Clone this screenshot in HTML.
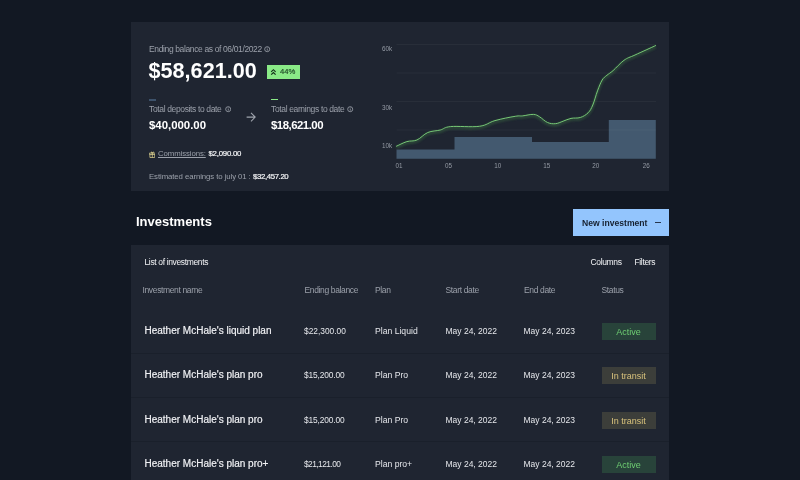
<!DOCTYPE html>
<html lang="en">
<head>
<meta charset="utf-8">
<title>Investments</title>
<style>
*{box-sizing:border-box;margin:0;padding:0}
html,body{width:800px;height:480px;overflow:hidden;background:#121823;}
body{font-family:"Liberation Sans",Arial,sans-serif;color:#fff;position:relative;-webkit-font-smoothing:antialiased}
.abs{position:absolute;white-space:nowrap;line-height:1}
.card{position:absolute;background:#1f2531}
.muted{color:#9ba0aa}
.t8{font-size:8px}
.b{font-weight:700}
.row{position:absolute;left:131px;width:538px;height:44.4px;border-bottom:1px solid #1a202b}
.cell{position:absolute;white-space:nowrap;line-height:1;top:50%;transform:translateY(-50%)}
.name{left:13.5px;font-size:10px;color:#f1f2f5;-webkit-text-stroke:0.18px #f1f2f5}
.amt{left:173px;font-size:8.4px;color:#e5e7eb}
.plan{left:244px;font-size:8.65px;color:#e5e7eb}
.sd{left:314.5px;font-size:8.5px;color:#e5e7eb}
.ed{left:392.5px;font-size:8.5px;color:#e5e7eb}
.badge{position:absolute;left:470.5px;width:54px;height:17px;top:50%;margin-top:-8px;font-size:9px;text-align:center;line-height:18px}
.active{background:#28433a;color:#6fcf73}
.transit{background:#3c3e3a;color:#d8c27c}
</style>
</head>
<body>
<div id="wrap" style="position:absolute;left:0;top:0;width:800px;height:480px;will-change:transform">

<!-- summary card -->
<div class="card" style="left:131px;top:22px;width:538px;height:169px"></div>

<div class="abs muted" style="left:149px;top:45.6px;font-size:8.5px;letter-spacing:-0.37px;margin-top:-0.8px">Ending balance as of 06/01/2022</div>
<svg class="abs" style="left:264.2px;top:46.2px" width="6.4" height="6.4" viewBox="0 0 7 7"><circle cx="3.5" cy="3.5" r="2.75" fill="none" stroke="#a3a8b1" stroke-width="0.85"/><rect x="3.1" y="3" width="0.8" height="2.1" fill="#a3a8b1"/><rect x="3.1" y="1.7" width="0.8" height="0.8" fill="#a3a8b1"/></svg>

<div class="abs b" id="big" style="left:148.6px;top:59.8px;font-size:21.6px;color:#fff">$58,621.00</div>

<div class="abs" style="left:266.8px;top:64.9px;width:33.2px;height:14.2px;background:#8aea87"></div>
<svg class="abs" style="left:270px;top:68px" width="8" height="8" viewBox="0 0 8 8"><path d="M1.2 3.9 L3.4 1.7 L5.6 3.9 M1.2 6.7 L3.4 4.5 L5.6 6.7" fill="none" stroke="#14301a" stroke-width="1.15"/></svg>
<div class="abs" style="left:280px;top:68px;font-size:7.7px;color:#1d4425;-webkit-text-stroke:0.15px #1d4425">44%</div>

<div class="abs" style="left:148.8px;top:98.8px;width:7px;height:1.9px;background:#3d526b"></div>
<div class="abs" style="left:271px;top:98.8px;width:6.6px;height:1.6px;background:#8aea87"></div>

<div class="abs muted" style="left:149px;top:105.5px;font-size:8.5px;letter-spacing:-0.36px;margin-top:-0.8px">Total deposits to date</div>
<svg class="abs" style="left:224.7px;top:106.2px" width="6.4" height="6.4" viewBox="0 0 7 7"><circle cx="3.5" cy="3.5" r="2.75" fill="none" stroke="#a3a8b1" stroke-width="0.85"/><rect x="3.1" y="3" width="0.8" height="2.1" fill="#a3a8b1"/><rect x="3.1" y="1.7" width="0.8" height="0.8" fill="#a3a8b1"/></svg>
<div class="abs b" style="left:149px;top:119.5px;font-size:11.4px">$40,000.00</div>

<svg class="abs" style="left:246.2px;top:112.4px" width="10" height="10" viewBox="0 0 10 10"><path d="M0.6 5.1 H9.2 M5 0.9 L9.2 5.1 L5 9.3" fill="none" stroke="#a0a5ae" stroke-width="1.05"/></svg>

<div class="abs muted" style="left:271px;top:105.5px;font-size:8.5px;letter-spacing:-0.36px;margin-top:-0.8px">Total earnings to date</div>
<svg class="abs" style="left:347.4px;top:106.2px" width="6.4" height="6.4" viewBox="0 0 7 7"><circle cx="3.5" cy="3.5" r="2.75" fill="none" stroke="#a3a8b1" stroke-width="0.85"/><rect x="3.1" y="3" width="0.8" height="2.1" fill="#a3a8b1"/><rect x="3.1" y="1.7" width="0.8" height="0.8" fill="#a3a8b1"/></svg>
<div class="abs b" style="left:271px;top:119.5px;font-size:11.4px;letter-spacing:-0.5px">$18,621.00</div>

<svg class="abs" style="left:148.7px;top:150.9px" width="6.6" height="6.9" viewBox="0 0 6.6 6.9"><path d="M0.4 2.1 H6.2 V3.5 H0.4 Z M0.9 3.5 V6.5 H5.7 V3.5 M3.3 2.1 V6.5 M3.3 2 C2.2 0.1 0.9 1.3 3.3 2 C5.7 1.3 4.4 0.1 3.3 2" fill="none" stroke="#ddd390" stroke-width="0.75" stroke-linejoin="round"/></svg>
<div class="abs muted" style="left:158px;top:149.9px;font-size:7.8px;letter-spacing:-0.1px;text-decoration:underline;text-decoration-thickness:0.6px;text-underline-offset:0.6px">Commissions:</div>
<div class="abs" style="left:208.5px;top:149.9px;font-size:7.8px;color:#f3f4f6;letter-spacing:-0.22px;-webkit-text-stroke:0.2px #f3f4f6">$2,090.00</div>

<div class="abs muted" style="left:149px;top:172.9px;font-size:7.8px;letter-spacing:-0.09px">Estimated earnings to july 01 :</div>
<div class="abs" style="left:253px;top:172.9px;font-size:7.8px;color:#f3f4f6;letter-spacing:-0.37px;-webkit-text-stroke:0.2px #f3f4f6">$32,457.20</div>

<!-- chart -->
<svg class="abs" style="left:370px;top:30px" width="300" height="150" viewBox="370 30 300 150">
  <path d="M396.5 158.8 V149.6 H454.5 V137.1 H532 V142 H608.8 V120 H655.8 V158.8 Z" fill="#43596f"/>
  <g stroke="#ffffff" stroke-opacity="0.055" stroke-width="0.8">
    <line x1="396.5" x2="656" y1="44.5" y2="44.5"/>
    <line x1="396.5" x2="656" y1="73" y2="73"/>
    <line x1="396.5" x2="656" y1="101.5" y2="101.5"/>
    <line x1="396.5" x2="656" y1="130" y2="130"/>
  </g>
  <defs><filter id="gl" x="-5%" y="-20%" width="110%" height="140%"><feGaussianBlur stdDeviation="0.9"/></filter></defs>
  <path d="M396.5 146.2 C398.4 145.4 403.2 142.7 406.9 141.6 C410.6 140.5 413.1 141.6 416.9 140 C420.7 138.4 423.6 134.3 427.8 132.5 C432.0 130.7 436.2 131.1 440.3 130 C444.4 128.9 443.6 127.3 450.6 126.6 C457.6 125.9 471.4 127.4 479.4 126.3 C487.4 125.2 488.5 122.4 495 120.6 C501.5 118.8 510.3 117.1 515.3 116.3 C520.2 115.5 519.2 116.2 522.5 115.9 C525.8 115.6 530.3 114.2 533.4 114.4 C536.5 114.6 537.2 115.4 539.7 116.9 C542.2 118.4 544.7 121.3 547.5 122.5 C550.3 123.7 552.5 123.9 555.3 123.7 C558.1 123.5 560.3 122.2 563.1 121.2 C565.9 120.2 567.9 119.1 571 118.4 C574.1 117.7 577.2 118.5 580.3 117.5 C583.4 116.5 585.9 115.0 588.1 112.8 C590.4 110.5 591.1 108.9 592.8 105 C594.5 101.1 595.8 95.4 597.5 90.9 C599.2 86.4 600.5 82.8 602.2 80 C603.9 77.2 604.9 77.0 606.9 75.3 C608.9 73.6 610.0 73.3 613.1 70.6 C616.2 67.9 620.1 63.1 624 60.3 C627.9 57.5 629.3 57.6 635 55 C640.7 52.4 651.9 47.3 655.6 45.6" fill="none" stroke="#33573c" stroke-width="2.6" stroke-linejoin="round" opacity="0.75" transform="translate(0,1.4)" filter="url(#gl)"/>
  <path d="M396.5 146.2 C398.4 145.4 403.2 142.7 406.9 141.6 C410.6 140.5 413.1 141.6 416.9 140 C420.7 138.4 423.6 134.3 427.8 132.5 C432.0 130.7 436.2 131.1 440.3 130 C444.4 128.9 443.6 127.3 450.6 126.6 C457.6 125.9 471.4 127.4 479.4 126.3 C487.4 125.2 488.5 122.4 495 120.6 C501.5 118.8 510.3 117.1 515.3 116.3 C520.2 115.5 519.2 116.2 522.5 115.9 C525.8 115.6 530.3 114.2 533.4 114.4 C536.5 114.6 537.2 115.4 539.7 116.9 C542.2 118.4 544.7 121.3 547.5 122.5 C550.3 123.7 552.5 123.9 555.3 123.7 C558.1 123.5 560.3 122.2 563.1 121.2 C565.9 120.2 567.9 119.1 571 118.4 C574.1 117.7 577.2 118.5 580.3 117.5 C583.4 116.5 585.9 115.0 588.1 112.8 C590.4 110.5 591.1 108.9 592.8 105 C594.5 101.1 595.8 95.4 597.5 90.9 C599.2 86.4 600.5 82.8 602.2 80 C603.9 77.2 604.9 77.0 606.9 75.3 C608.9 73.6 610.0 73.3 613.1 70.6 C616.2 67.9 620.1 63.1 624 60.3 C627.9 57.5 629.3 57.6 635 55 C640.7 52.4 651.9 47.3 655.6 45.6" fill="none" stroke="#7bd079" stroke-width="0.95" stroke-linejoin="round" stroke-linecap="round"/>
  <g font-family="Liberation Sans, Arial, sans-serif" font-size="6.3" fill="#949aa4">
    <text x="382" y="50.6">60k</text>
    <text x="382" y="110.3">30k</text>
    <text x="382" y="148">10k</text>
    <text x="395.5" y="167.7">01</text>
    <text x="445" y="167.7">05</text>
    <text x="494.3" y="167.7">10</text>
    <text x="543.2" y="167.7">15</text>
    <text x="592.3" y="167.7">20</text>
    <text x="642.7" y="167.7">26</text>
  </g>
</svg>

<!-- Investments header -->
<div class="abs b" style="left:136px;top:215px;font-size:13px;color:#fff">Investments</div>
<div class="abs" style="left:572.8px;top:209px;width:96.2px;height:27px;background:#93c5fd"></div>
<div class="abs b" style="left:582px;top:218.5px;font-size:8.6px;color:#16202f">New investment</div>
<div class="abs" style="left:655px;top:222.2px;width:6.2px;height:0.7px;background:#27364d"></div>

<!-- table card -->
<div class="card" style="left:131px;top:244.5px;width:538px;height:240px"></div>
<div class="abs" style="left:144.5px;top:259.2px;font-size:8.5px;letter-spacing:-0.36px;margin-top:-0.75px;color:#f3f4f6">List of investments</div>
<div class="abs" style="left:590.5px;top:259.2px;font-size:8.5px;letter-spacing:-0.36px;margin-top:-0.75px;color:#f3f4f6">Columns</div>
<div class="abs" style="left:634.5px;top:259.2px;font-size:8.5px;letter-spacing:-0.36px;margin-top:-0.75px;color:#f3f4f6">Filters</div>

<div class="abs muted" style="left:142.5px;top:287.2px;font-size:8.5px;letter-spacing:-0.36px;margin-top:-0.75px">Investment name</div>
<div class="abs muted" style="left:304.5px;top:287.2px;font-size:8.5px;letter-spacing:-0.36px;margin-top:-0.75px">Ending balance</div>
<div class="abs muted" style="left:375px;top:287.2px;font-size:8.5px;letter-spacing:-0.36px;margin-top:-0.75px">Plan</div>
<div class="abs muted" style="left:445.5px;top:287.2px;font-size:8.5px;letter-spacing:-0.36px;margin-top:-0.75px">Start date</div>
<div class="abs muted" style="left:524px;top:287.2px;font-size:8.5px;letter-spacing:-0.36px;margin-top:-0.75px">End date</div>
<div class="abs muted" style="left:601.5px;top:287.2px;font-size:8.5px;letter-spacing:-0.36px;margin-top:-0.75px">Status</div>

<div class="row" style="top:309.2px">
  <div class="cell name">Heather McHale's liquid plan</div><div class="cell amt">$22,300.00</div><div class="cell plan">Plan Liquid</div><div class="cell sd">May 24, 2022</div><div class="cell ed">May 24, 2023</div><div class="badge active">Active</div>
</div>
<div class="row" style="top:353.6px">
  <div class="cell name">Heather McHale's plan pro</div><div class="cell amt" style="letter-spacing:-0.15px">$15,200.00</div><div class="cell plan">Plan Pro</div><div class="cell sd">May 24, 2022</div><div class="cell ed">May 24, 2023</div><div class="badge transit">In transit</div>
</div>
<div class="row" style="top:398px">
  <div class="cell name">Heather McHale's plan pro</div><div class="cell amt" style="letter-spacing:-0.15px">$15,200.00</div><div class="cell plan">Plan Pro</div><div class="cell sd">May 24, 2022</div><div class="cell ed">May 24, 2023</div><div class="badge transit">In transit</div>
</div>
<div class="row" style="top:442.4px">
  <div class="cell name">Heather McHale's plan pro+</div><div class="cell amt" style="letter-spacing:-0.55px">$21,121.00</div><div class="cell plan">Plan pro+</div><div class="cell sd">May 24, 2022</div><div class="cell ed">May 24, 2022</div><div class="badge active">Active</div>
</div>

</div>
</body>
</html>
